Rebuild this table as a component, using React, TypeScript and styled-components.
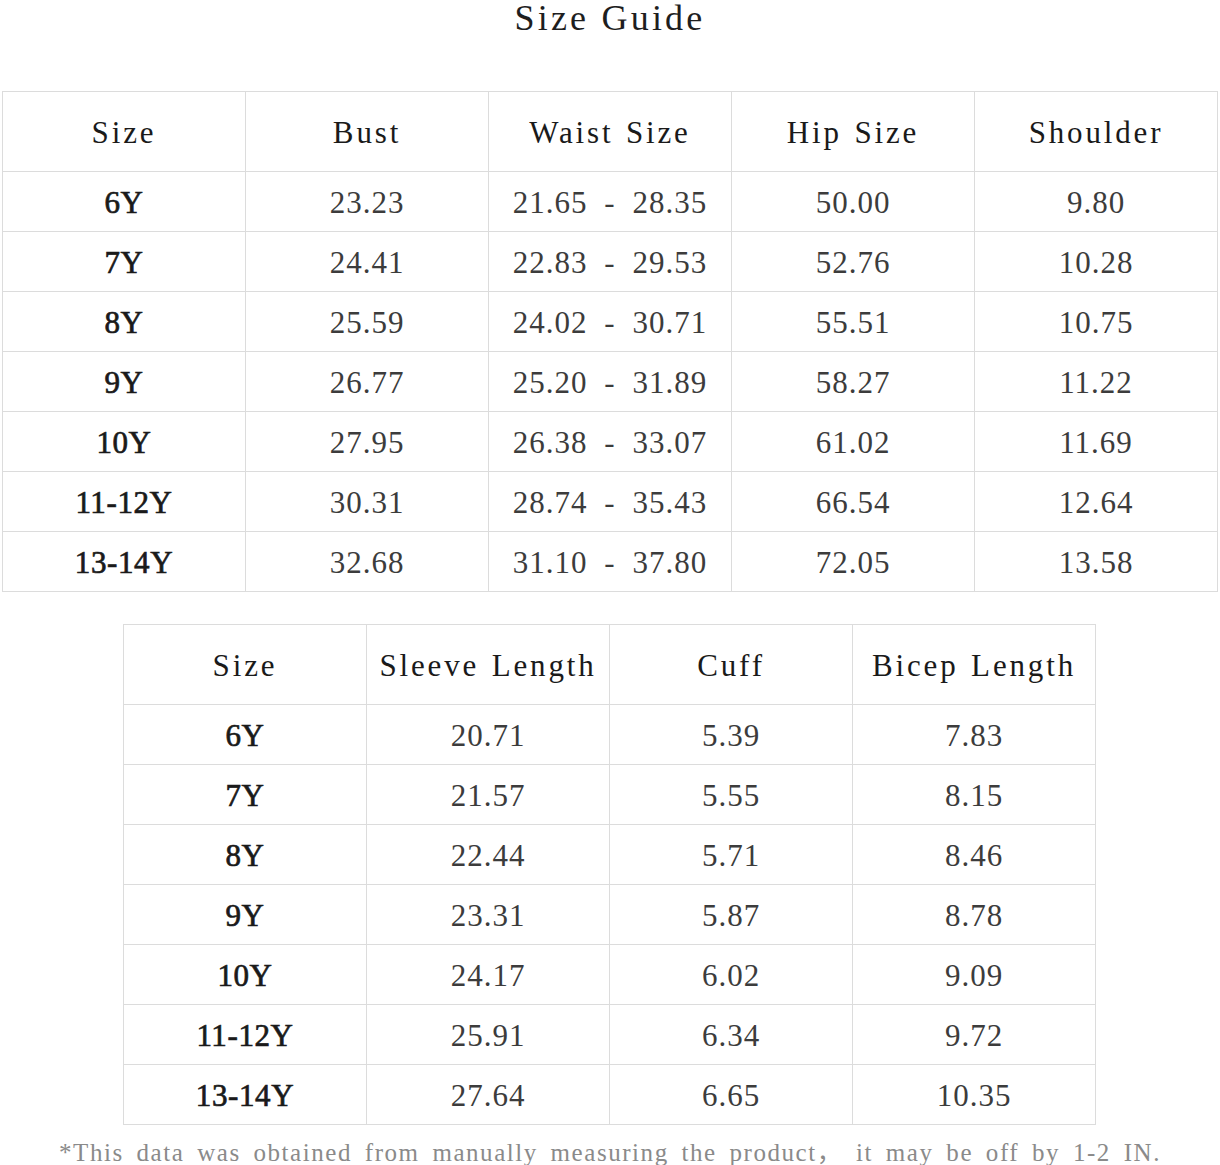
import React from "react";
import styled, { createGlobalStyle } from "styled-components";

const Global = createGlobalStyle`
  html, body { margin: 0; padding: 0; background: #ffffff; }
  body { font-family: "Liberation Serif", "Noto Sans CJK SC", serif; }
`;

const Page = styled.div`
  width: 1220px;
  display: flex;
  flex-direction: column;
  align-items: center;
`;

const Title = styled.h1`
  margin: 0 0 55px;
  font-size: 36px;
  line-height: 36px;
  font-weight: 400;
  letter-spacing: 3.2px;
  color: #1e1e1e;
`;

const Grid = styled.div<{ $cols: number; $inset: number }>`
  align-self: flex-start;
  margin: 0 0 32px ${(p) => p.$inset}px;
  display: grid;
  grid-template-columns: repeat(${(p) => p.$cols}, 243px);
  border-top: 1px solid #dcdcdc;
  border-left: 1px solid #dcdcdc;
`;

const Cell = styled.div<{ $head?: boolean; $size?: boolean }>`
  box-sizing: border-box;
  height: ${(p) => (p.$head ? 80 : 60)}px;
  border-right: 1px solid #dcdcdc;
  border-bottom: 1px solid #dcdcdc;
  display: flex;
  align-items: center;
  justify-content: center;
  padding-top: 2px;
  font-size: 31px;
  letter-spacing: ${(p) => (p.$head ? 2.85 : p.$size ? 0.6 : 1)}px;
  word-spacing: ${(p) => (p.$head ? 2 : 8)}px;
  font-weight: 400;
  -webkit-text-stroke: ${(p) => (p.$size ? "0.7px #1a1a1a" : "0")};
  color: ${(p) => (p.$head || p.$size ? "#1a1a1a" : "#3c3c3c")};
  white-space: pre;
`;

const Note = styled.p`
  margin: -17px 0 0;
  font-size: 25px;
  line-height: 25px;
  letter-spacing: 1.55px;
  word-spacing: 5px;
  color: #8a8a8a;
  white-space: pre;
`;

const table1 = {
  head: ["Size", "Bust", "Waist Size", "Hip Size", "Shoulder"],
  rows: [
    ["6Y", "23.23", "21.65 - 28.35", "50.00", "9.80"],
    ["7Y", "24.41", "22.83 - 29.53", "52.76", "10.28"],
    ["8Y", "25.59", "24.02 - 30.71", "55.51", "10.75"],
    ["9Y", "26.77", "25.20 - 31.89", "58.27", "11.22"],
    ["10Y", "27.95", "26.38 - 33.07", "61.02", "11.69"],
    ["11-12Y", "30.31", "28.74 - 35.43", "66.54", "12.64"],
    ["13-14Y", "32.68", "31.10 - 37.80", "72.05", "13.58"],
  ],
};

const table2 = {
  head: ["Size", "Sleeve Length", "Cuff", "Bicep Length"],
  rows: [
    ["6Y", "20.71", "5.39", "7.83"],
    ["7Y", "21.57", "5.55", "8.15"],
    ["8Y", "22.44", "5.71", "8.46"],
    ["9Y", "23.31", "5.87", "8.78"],
    ["10Y", "24.17", "6.02", "9.09"],
    ["11-12Y", "25.91", "6.34", "9.72"],
    ["13-14Y", "27.64", "6.65", "10.35"],
  ],
};

function SizeTable({
  data,
  inset,
}: {
  data: { head: string[]; rows: string[][] };
  inset: number;
}) {
  return (
    <Grid $cols={data.head.length} $inset={inset}>
      {data.head.map((h) => (
        <Cell key={h} $head>
          {h}
        </Cell>
      ))}
      {data.rows.map((r) =>
        r.map((v, i) => (
          <Cell key={r[0] + i} $size={i === 0}>
            {v}
          </Cell>
        ))
      )}
    </Grid>
  );
}

export default function App() {
  return (
    <Page>
      <Global />
      <Title>Size Guide</Title>
      <SizeTable data={table1} inset={2} />
      <SizeTable data={table2} inset={123} />
      <Note>*This data was obtained from manually measuring the product， it may be off by 1-2 IN.</Note>
    </Page>
  );
}
